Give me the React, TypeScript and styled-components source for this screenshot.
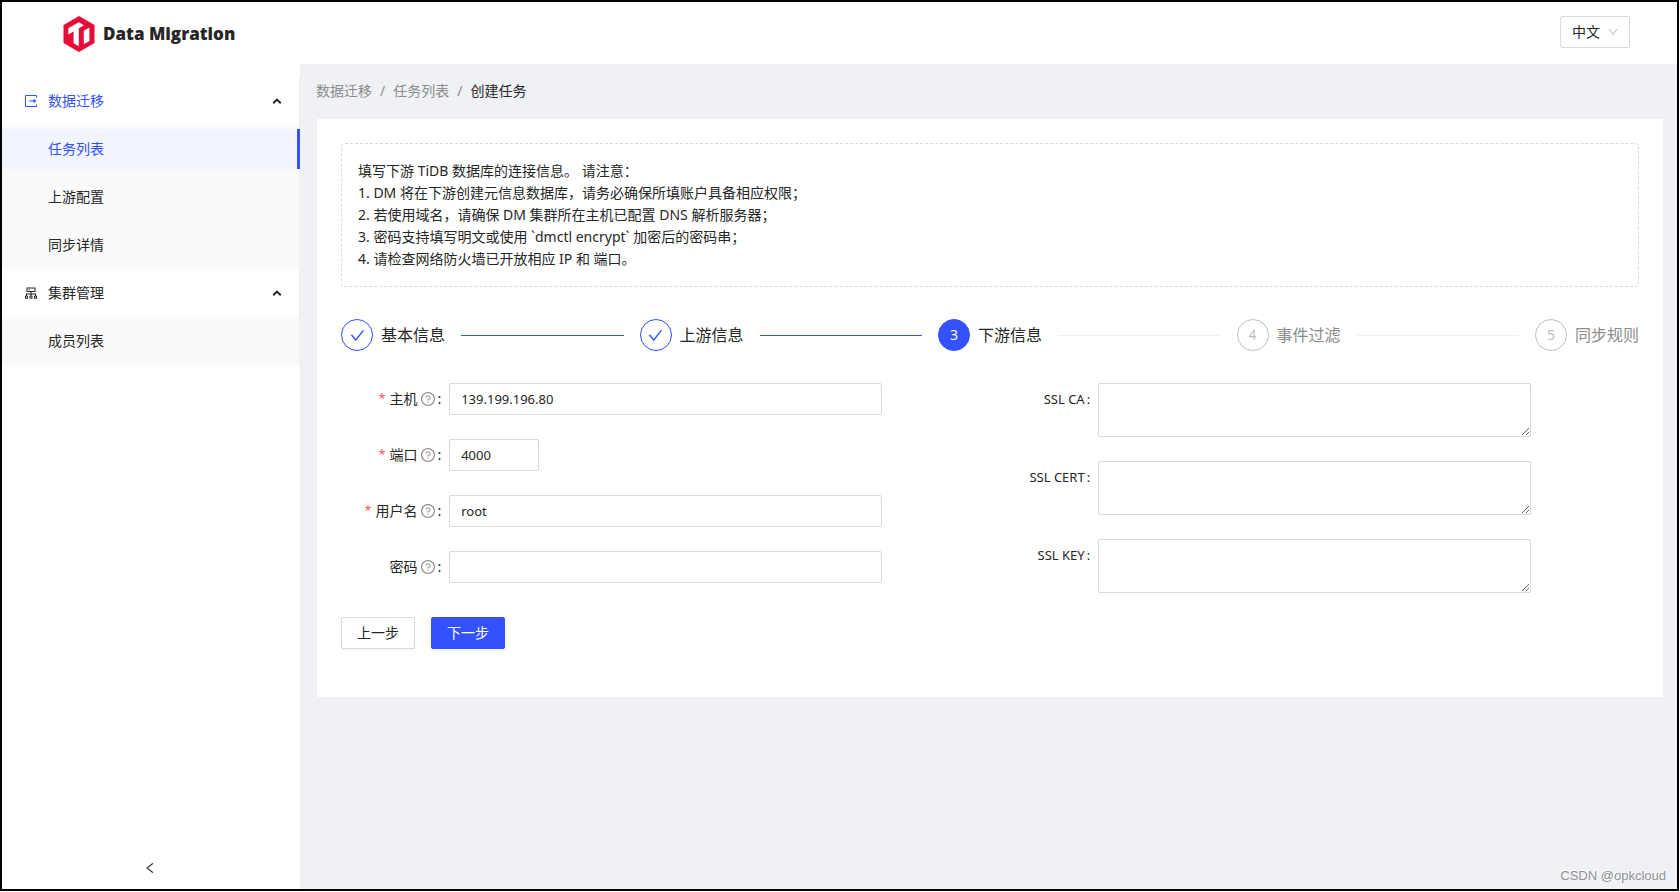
import React from 'react';
import styled, { createGlobalStyle, css } from 'styled-components';
import {
  AiOutlineCheck,
  AiOutlineCluster,
  AiOutlineDown,
  AiOutlineLeft,
  AiOutlineQuestionCircle,
} from 'react-icons/ai';

const primary = '#3351ff';
const text = '#262626';
const secondary = '#8c8c8c';
const border = '#d9d9d9';
const surface = '#eff1f5';

const GlobalStyle = createGlobalStyle`
  *, *::before, *::after { box-sizing: border-box; }
  body {
    margin: 0;
    background: #fff;
    color: ${text};
    font: 14px/22px "Noto Sans", "Noto Sans CJK SC", sans-serif;
  }
  button, input, textarea, select { font: inherit; color: inherit; }
  ul, ol { list-style: none; margin: 0; padding: 0; }
  a { color: inherit; text-decoration: none; }
`;

const Frame = styled.div`
  padding: 0 1px 1px 0;
`;

const Shell = styled.div`
  display: flex;
  flex-direction: column;
  min-height: calc(100vh - 1px);
  border: 2px solid #000;
`;

const Header = styled.header`
  display: flex;
  align-items: flex-start;
  justify-content: space-between;
  height: 62px;
  padding: 14px 47px 0 61px;
  background: #fff;
`;

const Brand = styled.a`
  display: flex;
  align-items: center;
  gap: 8px;
  font-family: "Open Sans", sans-serif;
  font-size: 17px;
  font-weight: 800;
`;

const SelectWrap = styled.div`
  position: relative;
  width: 70px;
  svg {
    position: absolute;
    right: 11px;
    top: 10px;
    color: #bfbfbf;
    pointer-events: none;
  }
`;

const Select = styled.select`
  appearance: none;
  width: 100%;
  height: 32px;
  padding: 0 11px;
  border: 1px solid ${border};
  border-radius: 2px;
  background: #fff;
`;

const Body = styled.div`
  display: flex;
  flex: 1;
`;

const Sider = styled.aside`
  display: flex;
  flex-direction: column;
  justify-content: space-between;
  flex: 0 0 298px;
  padding-top: 13px;
  background: #fff;
`;

const Menu = styled.ul`
  border-right: 1px solid #f0f0f0;
`;

const GroupTitle = styled.button<{ $active?: boolean }>`
  display: flex;
  align-items: center;
  gap: 9px;
  width: 100%;
  height: 48px;
  padding: 0 17px 0 21px;
  border: 0;
  background: #fff;
  color: ${(p) => (p.$active ? primary : text)};
  text-align: left;
  span { flex: 1; }
`;

const SubMenu = styled.ul`
  display: flex;
  flex-direction: column;
  gap: 8px;
  padding: 4px 0;
  background: #fafafa;
`;

const MenuLink = styled.a<{ $active?: boolean }>`
  display: block;
  position: relative;
  padding-left: 46px;
  line-height: 40px;
  ${(p) =>
    p.$active &&
    css`
      color: ${primary};
      background: #f0f5ff;
      &::after {
        content: '';
        position: absolute;
        inset: 0 -1px 0 auto;
        width: 3px;
        background: ${primary};
      }
    `}
`;

const Collapse = styled.button`
  display: flex;
  align-items: center;
  justify-content: center;
  height: 42px;
  padding: 0 3px 0 0;
  border: 0;
  background: #fff;
`;

const Main = styled.main`
  flex: 1;
  min-width: 0;
  background: ${surface};
`;

const Breadcrumb = styled.ol`
  display: flex;
  padding: 16px;
  color: ${secondary};
  li + li::before {
    content: '/';
    margin: 0 8px;
    color: ${secondary};
  }
  li:last-child { color: ${text}; }
`;

const Card = styled.section`
  margin: 1px 14px 0 17px;
  padding: 24px 24px 48px;
  background: #fff;
`;

const Notice = styled.div`
  padding: 16px;
  border: 1px dashed ${border};
  border-radius: 4px;
  p { margin: 0; }
`;

const Steps = styled.ol`
  display: flex;
  gap: 16px;
  margin: 32px 0;
`;

type StepState = 'done' | 'current' | 'wait';

const Step = styled.li<{ $state: StepState }>`
  display: flex;
  align-items: center;
  flex: 1;
  font-size: 16px;
  line-height: 32px;
  white-space: nowrap;
  color: ${(p) => (p.$state === 'wait' ? secondary : text)};
  &:not(:last-child)::after {
    content: '';
    flex: 1;
    height: 1px;
    margin-left: 16px;
    background: ${(p) => (p.$state === 'done' ? primary : '#f0f0f0')};
  }
  &:last-child { flex: none; }
`;

const stepColors = {
  done: css`
    border-color: ${primary};
    color: ${primary};
  `,
  current: css`
    border-color: ${primary};
    background: ${primary};
    color: #fff;
  `,
  wait: css`
    border-color: #bfbfbf;
    color: #bfbfbf;
  `,
};

const StepIcon = styled.span<{ $state: StepState }>`
  display: flex;
  align-items: center;
  justify-content: center;
  width: 32px;
  height: 32px;
  margin-right: 8px;
  border: 1px solid;
  border-radius: 50%;
  font-size: 14px;
  ${(p) => stepColors[p.$state]}
`;

const FormGrid = styled.div`
  display: grid;
  grid-template-columns: 1fr 1fr;
`;

const Field = styled.div`
  display: grid;
  grid-template-columns: 4fr 16fr 4fr;
  margin-bottom: 24px;
`;

const Label = styled.label<{ $required?: boolean; $latin?: boolean }>`
  display: flex;
  align-items: center;
  justify-content: flex-end;
  height: 32px;
  padding-right: 8px;
  font-size: ${(p) => (p.$latin ? '13px' : '14px')};
  white-space: nowrap;
  &::before {
    content: ${(p) => (p.$required ? "'*'" : 'none')};
    margin-right: 4px;
    color: #ff4d4f;
    font-size: 12px;
  }
  &::after {
    content: ':';
    margin-left: 2px;
  }
  svg {
    margin: 0 -1px 0 3px;
    color: ${secondary};
  }
`;

const Input = styled.input<{ $short?: boolean }>`
  width: ${(p) => (p.$short ? '90px' : '100%')};
  height: 32px;
  padding: 0 11px;
  border: 1px solid ${border};
  border-radius: 2px;
  background: #fff;
  font-size: 13px;
`;

const TextArea = styled.textarea`
  display: block;
  width: 100%;
  height: 54px;
  padding: 4px 11px;
  border: 1px solid ${border};
  border-radius: 2px;
  resize: vertical;
`;

const Actions = styled.div`
  display: flex;
  gap: 16px;
`;

const Button = styled.button<{ $primary?: boolean }>`
  height: 32px;
  padding: 0 15px;
  border: 1px solid ${(p) => (p.$primary ? primary : border)};
  border-radius: 2px;
  background: ${(p) => (p.$primary ? primary : '#fff')};
  color: ${(p) => (p.$primary ? '#fff' : text)};
  box-shadow: 0 2px 0 rgba(0, 0, 0, 0.03);
`;

const Watermark = styled.div`
  position: absolute;
  right: 14px;
  bottom: 5px;
  color: #8f9094;
  font-family: "Liberation Sans", sans-serif;
  font-size: 13px;
  text-shadow: -1px -1px 0 #fff;
`;

const Logo = () => (
  <svg width="32" height="36" viewBox="0 0 32 36" aria-hidden="true">
    <path d="M16 0 31.5 9v18L16 36 .5 27V9z" fill="#e60c37" />
    <path d="M5.3 12.3 15.8 6.2l5.2 3-5.2 3v18l-5.2-3V15.4l-5.3 3z" fill="#fff" />
    <path d="M20.8 14.8 26.4 11.5v13.4l-5.6 3.3z" fill="#fff" />
  </svg>
);

const ExportIcon = () => (
  <svg width="16" height="16" viewBox="0 0 16 16" fill="none" aria-hidden="true">
    <path d="M13.5 4.5v-2h-11v11h11v-2" stroke="currentColor" />
    <path d="M6 8h5" stroke="currentColor" />
    <path d="M10.5 5.8 13.5 8l-3 2.2z" fill="currentColor" />
  </svg>
);

const ClusterIcon = () => <AiOutlineCluster size={16} />;

const Caret = () => (
  <svg width="10" height="10" viewBox="0 0 10 10" fill="none" aria-hidden="true">
    <path d="M1.2 7.2 5 3.6l3.8 3.6" stroke={text} strokeWidth="2" />
  </svg>
);

const menu = [
  { title: '数据迁移', icon: ExportIcon, active: true, items: ['任务列表', '上游配置', '同步详情'] },
  { title: '集群管理', icon: ClusterIcon, active: false, items: ['成员列表'] },
];

const notice = [
  '填写下游 TiDB 数据库的连接信息。 请注意：',
  '1. DM 将在下游创建元信息数据库，请务必确保所填账户具备相应权限；',
  '2. 若使用域名，请确保 DM 集群所在主机已配置 DNS 解析服务器；',
  '3. 密码支持填写明文或使用 `dmctl encrypt` 加密后的密码串；',
  '4. 请检查网络防火墙已开放相应 IP 和 端口。',
];

const steps: { title: string; state: StepState }[] = [
  { title: '基本信息', state: 'done' },
  { title: '上游信息', state: 'done' },
  { title: '下游信息', state: 'current' },
  { title: '事件过滤', state: 'wait' },
  { title: '同步规则', state: 'wait' },
];

const fields = [
  { id: 'host', label: '主机', value: '139.199.196.80', required: true },
  { id: 'port', label: '端口', value: '4000', required: true, short: true },
  { id: 'user', label: '用户名', value: 'root', required: true },
  { id: 'password', label: '密码', value: '', type: 'password' },
];

const sslFields = [
  { id: 'ssl-ca', label: 'SSL CA' },
  { id: 'ssl-cert', label: 'SSL CERT' },
  { id: 'ssl-key', label: 'SSL KEY' },
];

export default function App() {
  return (
    <Frame>
      <GlobalStyle />
      <Shell>
        <Header>
          <Brand href="#">
            <Logo />
            Data Migration
          </Brand>
          <SelectWrap>
            <Select aria-label="语言" defaultValue="zh">
              <option value="zh">中文</option>
            </Select>
            <AiOutlineDown size={12} />
          </SelectWrap>
        </Header>
        <Body>
          <Sider>
            <nav>
              <Menu>
                {menu.map(({ title, icon: Icon, active, items }) => (
                  <li key={title}>
                    <GroupTitle type="button" $active={active} aria-expanded="true">
                      <Icon />
                      <span>{title}</span>
                      <Caret />
                    </GroupTitle>
                    <SubMenu>
                      {items.map((item) => (
                        <li key={item}>
                          <MenuLink href="#" $active={item === '任务列表'}>
                            {item}
                          </MenuLink>
                        </li>
                      ))}
                    </SubMenu>
                  </li>
                ))}
              </Menu>
            </nav>
            <Collapse type="button" aria-label="收起">
              <AiOutlineLeft size={14} />
            </Collapse>
          </Sider>
          <Main>
            <Breadcrumb>
              <li>数据迁移</li>
              <li>
                <a href="#">任务列表</a>
              </li>
              <li>创建任务</li>
            </Breadcrumb>
            <Card>
              <Notice>
                {notice.map((line) => (
                  <p key={line}>{line}</p>
                ))}
              </Notice>
              <Steps>
                {steps.map(({ title, state }, i) => (
                  <Step key={title} $state={state}>
                    <StepIcon $state={state}>
                      {state === 'done' ? <AiOutlineCheck size={17} /> : i + 1}
                    </StepIcon>
                    {title}
                  </Step>
                ))}
              </Steps>
              <form onSubmit={(e) => e.preventDefault()}>
                <FormGrid>
                  <div>
                    {fields.map((f) => (
                      <Field key={f.id}>
                        <Label htmlFor={f.id} $required={f.required}>
                          {f.label}
                          <AiOutlineQuestionCircle size={16} />
                        </Label>
                        <Input id={f.id} type={f.type ?? 'text'} defaultValue={f.value} $short={f.short} />
                      </Field>
                    ))}
                  </div>
                  <div>
                    {sslFields.map((f) => (
                      <Field key={f.id}>
                        <Label htmlFor={f.id} $latin>
                          {f.label}
                        </Label>
                        <TextArea id={f.id} />
                      </Field>
                    ))}
                  </div>
                </FormGrid>
                <Actions>
                  <Button type="button">上一步</Button>
                  <Button type="submit" $primary>
                    下一步
                  </Button>
                </Actions>
              </form>
            </Card>
          </Main>
        </Body>
      </Shell>
      <Watermark>CSDN @opkcloud</Watermark>
    </Frame>
  );
}
